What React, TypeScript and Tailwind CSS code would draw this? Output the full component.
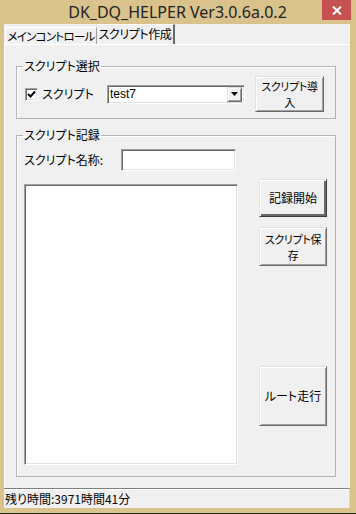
import React from 'react';

// classic Win32 look: raised buttons, sunken edit boxes
const raised =
  "bg-[#f0f0f0] border border-t-[#e3e3e3] border-l-[#e3e3e3] border-r-[#696969] border-b-[#696969] shadow-[inset_1px_1px_0_#fff,inset_-1px_-1px_0_#a0a0a0]";
const sunken =
  "bg-white border border-t-[#a0a0a0] border-l-[#a0a0a0] border-r-white border-b-white shadow-[inset_1px_1px_0_#696969,inset_-1px_-1px_0_#e3e3e3]";

const WinButton: React.FC<{ className?: string; children: React.ReactNode }> = ({ className, children }) => (
    <button className={`${raised} flex flex-col items-center justify-center text-center text-black whitespace-nowrap ${className ?? ''}`}>
        {children}
    </button>
);

const App: React.FC = () => {
    return (
        <div className="w-[356px] h-[514px] bg-[#dac28c] flex flex-col font-['Noto_Sans_CJK_JP',sans-serif] [font-feature-settings:'palt'] text-black border-b border-b-[#2a2a2a]">
            {/* Title bar */}
            <div className="h-[24px] shrink-0 flex pl-[4px] pr-[5px]">
                <div className="w-[29px]" />
                <div className="flex-1 flex items-center justify-center text-[16px] leading-[20px] font-['Noto_Sans',sans-serif] text-[#222] pb-[1px]">
                    DK_DQ_HELPER Ver3.0.6a.0.2
                </div>
                <div className="w-[29px] h-[20px] bg-[#c75050] flex items-center justify-center">
                    <svg width="10" height="9" viewBox="0 0 10 9">
                        <path d="M1 0.5 L9 8.5 M9 0.5 L1 8.5" stroke="#fff" strokeWidth="2" />
                    </svg>
                </div>
            </div>

            {/* Client area */}
            <div className="flex-1 ml-[4px] mr-[6px] mb-[5px] bg-[#f0f0f0] flex flex-col">
                {/* Tabs */}
                <div className="h-[20px] shrink-0 flex items-end pl-[1px]">
                    <div className="h-[17px] w-[92px] border-t border-l border-t-white border-l-white border-r border-r-[#a0a0a0] flex items-center justify-center text-[11.5px] leading-[14px] tracking-[-0.7px] whitespace-nowrap">
                        メインコントロール
                    </div>
                    <div className="h-[20px] w-[78px] border-t border-t-white border-r-2 border-r-[#696969] flex items-start justify-center pt-[2px] text-[12px] leading-[14px] tracking-[-0.4px] whitespace-nowrap">
                        スクリプト作成
                    </div>
                </div>

                {/* Tab page */}
                <div className="h-[444px] shrink-0 border-t border-t-white border-l border-l-white pl-[11px] flex flex-col">
                    {/* Script select group */}
                    <fieldset className="mt-[14px] w-[320px] border border-[#b4b4b4] shadow-[inset_1px_1px_0_#fff] pl-[8px] pr-[10px] pt-[3px] pb-[6px]">
                        <legend className="-ml-[2px] px-[1px] text-[12px] leading-[14px]">スクリプト選択</legend>
                        <div className="flex items-center">
                            <div className="w-[82px] flex items-center gap-[4px]">
                                <div className={`${sunken} w-[13px] h-[13px] flex items-center justify-center`}>
                                    <svg width="9" height="9" viewBox="0 0 9 9">
                                        <path d="M1 4 L3.5 6.5 L8 1.5" stroke="#000" strokeWidth="2" fill="none" />
                                    </svg>
                                </div>
                                <span className="text-[12px] leading-[14px]">スクリプト</span>
                            </div>
                            <div className={`${sunken} w-[138px] h-[19px] flex items-center pl-[2px] pr-[2px]`}>
                                <span className="flex-1 text-[12px] leading-[14px] font-['Liberation_Sans',sans-serif]">test7</span>
                                <div className={`${raised} w-[15px] h-[15px] flex items-center justify-center`}>
                                    <svg width="7" height="4" viewBox="0 0 7 4">
                                        <path d="M0 0 H7 L3.5 4 Z" fill="#000" />
                                    </svg>
                                </div>
                            </div>
                            <WinButton className="ml-[10px] w-[69px] h-[36px] text-[11px] leading-[16px] tracking-[-0.3px]">
                                <span>スクリプト導</span>
                                <span>入</span>
                            </WinButton>
                        </div>
                    </fieldset>

                    {/* Script record group */}
                    <fieldset className="mt-[9px] w-[320px] border border-[#b4b4b4] shadow-[inset_1px_1px_0_#fff] pl-[7px] pt-[7px] pb-[11px]">
                        <legend className="-ml-[1px] px-[1px] text-[12px] leading-[14px]">スクリプト記録</legend>
                        <div className="flex items-center">
                            <span className="w-[97px] text-[12px] leading-[14px]">スクリプト名称:</span>
                            <div className={`${sunken} w-[115px] h-[22px]`} />
                        </div>
                        <div className="mt-[8px] flex items-start">
                            <div className={`${sunken} mt-[5px] w-[214px] h-[281px]`} />
                            <div className="ml-[21px] w-[68px] flex flex-col">
                                <WinButton className="h-[38px] text-[12px] leading-[14px] !border-r-[#3c3c3c] !border-b-[#3c3c3c] shadow-[inset_1px_1px_0_#fff,inset_-2px_-2px_0_#696969]">
                                    記録開始
                                </WinButton>
                                <WinButton className="mt-[10px] h-[39px] text-[11px] leading-[16px] tracking-[-0.3px]">
                                    <span>スクリプト保</span>
                                    <span>存</span>
                                </WinButton>
                                <WinButton className="mt-[100px] h-[60px] text-[12px] leading-[14px]">
                                    ルート走行
                                </WinButton>
                            </div>
                        </div>
                    </fieldset>
                </div>

                {/* Status bar */}
                <div className="flex-1 border-t border-t-[#808080] shadow-[inset_0_1px_0_#fff] border-r border-r-[#d8d8d8] flex items-center pl-[1px] text-[12px] leading-[14px]">
                    残り時間:3971時間41分
                </div>
            </div>
        </div>
    );
};

export default App;
